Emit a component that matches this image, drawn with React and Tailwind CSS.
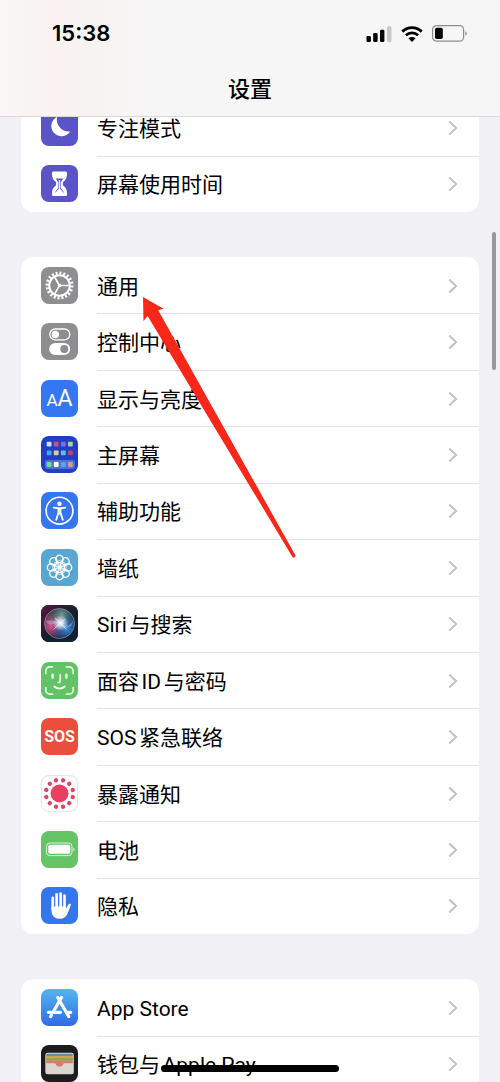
import React from 'react';

const FocusIcon = () => (
  <svg viewBox="0 0 37 37" className="size-full">
    <path
      d="M16.2 7.8A10.2 10.2 0 1 0 29.2 22.400A11.800 11.800 0 0 1 16.2 7.8Z"
      fill="#fff"
    />
  </svg>
);

const HourglassIcon = () => (
  <svg viewBox="0 0 37 37" className="size-full">
    <path
      d="M12.4 6.5h12.2a1.5 1.5 0 0 1 1.5 1.5c0 4.6-1.200 7.2-4.200 9.200v3c3 2 4.200 4.600 4.200 9.200a1.500 1.500 0 0 1-1.500 1.500H12.400a1.500 1.500 0 0 1-1.500-1.500c0-4.600 1.200-7.200 4.200-9.200v-3c-3-2-4.200-4.600-4.200-9.200a1.500 1.500 0 0 1 1.500-1.500Z"
      fill="#fff"
    />
    <path d="M14.800 13.500h7.400l-2.400 3.700v5.600l3.200 4.700h-9l3.200-4.700v-5.600Z" fill="#5a54c8" />
    <path d="M18.500 15v12M15.500 27.500L18.500 24L21.500 27.500Z" stroke="#fff" strokeWidth="1.300" fill="#fff" />
  </svg>
);

const GearIcon = () => (
  <svg viewBox="0 0 37 37" className="size-full" fill="none" stroke="#fff">
    <circle cx="18.5" cy="18.5" r="10.300" strokeWidth="2" />
    <circle cx="18.5" cy="18.5" r="12.500" strokeWidth="3" pathLength="40" strokeDasharray="1 1" />
    <path d="M18.500 18.500H28.500M18.500 18.500L13.500 9.800M18.500 18.500L13.500 27.200" strokeWidth="1.600" />
    <circle cx="18.5" cy="18.5" r="1.700" fill="#fff" stroke="none" />
  </svg>
);

const TogglesIcon = () => (
  <svg viewBox="0 0 37 37" className="size-full">
    <rect x="8.800" y="6" width="20" height="10.900" rx="5.400" fill="none" stroke="#fff" strokeWidth="1.300" />
    <circle cx="14.300" cy="11.500" r="3.700" fill="#fff" />
    <rect x="8.200" y="20" width="21" height="12" rx="6" fill="#fff" />
    <circle cx="23.300" cy="26" r="4" fill="#8e8e90" />
  </svg>
);

const DisplayIcon = () => (
  <span className="flex items-baseline justify-center font-['Roboto',sans-serif] leading-none text-white">
    <span className="text-[17px]">A</span>
    <span className="text-[23px]">A</span>
  </span>
);

const homeTiles = [
  ['#cfe3e6', '#c9507f', '#8f63e8', '#a9cf9a'],
  ['#4aa3ee', '#e6c98c', '#58c4dc', '#b8456c'],
  ['#6fdc9a', '#ffffff', '#55a7f0', '#d59a8c'],
];

const HomeScreenIcon = () => (
  <svg viewBox="0 0 37 37" className="size-full">
    <rect x="4" y="24" width="30" height="9" rx="2.500" fill="#4f6fdd" />
    {homeTiles.map((row, r) =>
      row.map((color, c) => (
        <rect
          key={`${r}-${c}`}
          x={5.700 + c * 7.100}
          y={[5.800, 14.400, 26.100][r]}
          width="4.800"
          height="4.800"
          rx="0.800"
          fill={color}
        />
      ))
    )}
  </svg>
);

const AccessibilityIcon = () => (
  <svg viewBox="0 0 37 37" className="size-full" fill="none" stroke="#fff" strokeLinecap="round" strokeLinejoin="round">
    <circle cx="18.5" cy="18.700" r="13.400" strokeWidth="1.600" />
    <circle cx="18.5" cy="11.800" r="2.200" fill="#fff" stroke="none" />
    <path d="M12.800 15.600L17 16.300H20L24.200 15.600" strokeWidth="1.900" />
    <path d="M17.200 16.500h2.600v5.500h-2.600Z" fill="#fff" strokeWidth="1.200" />
    <path d="M17.300 21.500L15.200 27.800M19.700 21.500L21.800 27.800" strokeWidth="1.900" />
  </svg>
);

const petals = [0, 45, 90, 135, 180, 225, 270, 315];

const WallpaperIcon = () => (
  <svg viewBox="0 0 37 37" className="size-full" fill="none" stroke="#fff">
    {petals.map((angle) => (
      <g key={angle} transform={`rotate(${angle} 18.5 18.5)`}>
        <circle cx="18.5" cy="10" r="3.700" strokeWidth="1.400" />
        <ellipse cx="18.5" cy="14" rx="2.200" ry="2.300" strokeWidth="0.800" />
      </g>
    ))}
    <circle cx="18.5" cy="18.5" r="2.100" fill="#fff" stroke="none" />
  </svg>
);

const SiriIcon = () => (
  <svg viewBox="0 0 37 37" className="size-full">
    <defs>
      <linearGradient id="siriBg" x1="0" y1="0" x2="1" y2="1">
        <stop offset="0" stopColor="#5c173c" />
        <stop offset="0.500" stopColor="#14202c" />
        <stop offset="1" stopColor="#10203a" />
      </linearGradient>
      <radialGradient id="siriPink" cx="0.220" cy="0.580" r="0.500">
        <stop offset="0" stopColor="#e0528f" />
        <stop offset="1" stopColor="#e0528f" stopOpacity="0" />
      </radialGradient>
      <radialGradient id="siriGreen" cx="0.580" cy="0.220" r="0.550">
        <stop offset="0" stopColor="#84a8a0" stopOpacity="0.900" />
        <stop offset="1" stopColor="#2c7b6c" stopOpacity="0" />
      </radialGradient>
      <radialGradient id="siriBlue" cx="0.740" cy="0.680" r="0.500">
        <stop offset="0" stopColor="#3a8fe4" />
        <stop offset="1" stopColor="#2b5fc4" stopOpacity="0" />
      </radialGradient>
      <radialGradient id="siriGlow">
        <stop offset="0" stopColor="#fff" />
        <stop offset="0.350" stopColor="#fff" stopOpacity="0.750" />
        <stop offset="1" stopColor="#fff" stopOpacity="0" />
      </radialGradient>
    </defs>
    <rect width="37" height="37" fill="url(#siriBg)" />
    <circle cx="18.5" cy="18.5" r="15" fill="url(#siriPink)" />
    <circle cx="18.5" cy="18.5" r="15" fill="url(#siriGreen)" />
    <circle cx="18.5" cy="18.5" r="15" fill="url(#siriBlue)" />
    <circle cx="18.5" cy="18.5" r="15" fill="none" stroke="#b9c4d6" strokeOpacity="0.500" />
    <path d="M5 16C11 14 15 17 19 19S28 23 32 16C31 24 24 24 19 19S10 25 5 16Z" fill="#bcd4f4" fillOpacity="0.400" />
    <circle cx="19.500" cy="18" r="8" fill="url(#siriGlow)" />
    <path d="M13 24L24 14M14 13L25 24" stroke="#fff" strokeOpacity="0.600" strokeLinecap="round" />
  </svg>
);

const FaceIdIcon = () => (
  <svg viewBox="0 0 37 37" className="size-full" fill="none" stroke="#eaffea" strokeWidth="1.700" strokeLinecap="round">
    <path d="M4.800 11.500V9a4.200 4.200 0 0 1 4.200-4.200h2.500M25.500 4.800H28a4.200 4.200 0 0 1 4.200 4.200v2.500M32.200 25.500V28a4.200 4.200 0 0 1-4.200 4.200h-2.500M11.500 32.200H9A4.200 4.200 0 0 1 4.800 28v-2.500" />
    <path d="M11.600 12.800v2.700M25.400 12.800v2.700" strokeWidth="2.500" />
    <path d="M19.200 12.500v6.200c0 1.200-.6 1.800-1.900 1.800" />
    <path d="M13.300 24.500c2.800 2.800 7.600 2.800 10.400 0" strokeWidth="1.900" />
  </svg>
);

const SosIcon = () => (
  <span className="font-['Roboto',sans-serif] text-[16px] leading-none font-bold text-white">SOS</span>
);

const exposureDots = [15, 45, 75, 105, 135, 165, 195, 225, 255, 285, 315, 345];

const ExposureIcon = () => (
  <svg viewBox="0 0 37 37" className="size-full" fill="#dd4468">
    <circle cx="18.5" cy="18.5" r="9" fill="#e8405f" />
    {exposureDots.map((angle) => (
      <circle key={angle} cx="18.5" cy="4.800" r="2.200" transform={`rotate(${angle} 18.5 18.5)`} />
    ))}
  </svg>
);

const BatteryIcon = () => (
  <svg viewBox="0 0 37 37" className="size-full">
    <rect x="5.500" y="12" width="25.500" height="12.600" rx="3.400" fill="none" stroke="#d9f5d9" strokeWidth="1" />
    <rect x="7.300" y="13.800" width="22" height="9" rx="1.800" fill="#fff" />
    <path d="M32.300 16.500c1.700.5 1.700 3.100 0 3.600Z" fill="#d9f5d9" />
  </svg>
);

const HandIcon = () => (
  <svg viewBox="0 0 37 37" className="size-full" fill="none" stroke="#fff" strokeLinecap="round">
    <path d="M11.700 10.800V22M15.600 7.300V20M19.600 6.500V20M23.500 8.500V20" strokeWidth="2.700" />
    <path
      d="M10.400 19.500h14.500v2.300l2.200-3.800c.7-1.200 1.700-1.400 2.900-.8-.8 2.500-2 6-3.200 8.800-1.500 3.600-4 5.800-8.300 5.800-5.400 0-8.100-3.800-8.100-8.800Z"
      fill="#fff"
      stroke="none"
    />
  </svg>
);

const AppStoreIcon = () => (
  <svg viewBox="0 0 37 37" className="size-full" fill="none" stroke="#fff" strokeWidth="3.200" strokeLinecap="round">
    <path d="M20.500 8.500L12.500 22.500M10.400 26.300L9.700 27.500M16.800 8.500L27.700 27.500" />
    <path d="M7.300 23.300H19.500M25.300 23.300H29.700" />
  </svg>
);

const WalletIcon = () => (
  <svg viewBox="0 0 37 37" className="size-full">
    <rect x="4.300" y="7.800" width="28.500" height="21.500" rx="2.200" fill="#dad7ce" />
    <path d="M5.200 11V9.900a1.200 1.200 0 0 1 1.200-1.200h24.200a1.200 1.200 0 0 1 1.200 1.200V11Z" fill="#5d8fae" />
    <rect x="5.200" y="11" width="26.600" height="3.200" fill="#c9a84e" />
    <rect x="5.200" y="13.200" width="26.600" height="2.600" fill="#8da456" />
    <path d="M5.200 15.800h26.600v2.400h-9c-.6 2-2.200 3.400-4.300 3.400s-3.700-1.400-4.300-3.400h-9Z" fill="#e0786c" />
  </svg>
);

const groups = [
  {
    id: 'focus',
    className: '-mt-[18px] min-h-[113px]',
    items: [
      { label: '专注模式', icon: FocusIcon, tile: 'bg-[#5a54c8]' },
      { label: '屏幕使用时间', icon: HourglassIcon, tile: 'bg-[#5a54c8]' },
    ],
  },
  {
    id: 'general',
    className: 'min-h-[677px]',
    items: [
      { label: '通用', icon: GearIcon, tile: 'bg-[#8e8e90]' },
      { label: '控制中心', icon: TogglesIcon, tile: 'bg-[#8e8e90]' },
      { label: '显示与亮度', icon: DisplayIcon, tile: 'bg-[#3577f0]' },
      { label: '主屏幕', icon: HomeScreenIcon, tile: 'bg-[#1f3fc4]' },
      { label: '辅助功能', icon: AccessibilityIcon, tile: 'bg-[#3575ee]' },
      { label: '墙纸', icon: WallpaperIcon, tile: 'bg-[#58a6d2]' },
      { label: 'Siri与搜索', icon: SiriIcon, tile: 'bg-[#14202c]' },
      { label: '面容ID与密码', icon: FaceIdIcon, tile: 'bg-[#62c366]' },
      { label: 'SOS紧急联络', icon: SosIcon, tile: 'bg-[#eb4e3d]' },
      { label: '暴露通知', icon: ExposureIcon, tile: 'bg-white ring-1 ring-[#e8e8ec] ring-inset' },
      { label: '电池', icon: BatteryIcon, tile: 'bg-[#64c466]' },
      { label: '隐私', icon: HandIcon, tile: 'bg-[#3576ee]' },
    ],
  },
  {
    id: 'store',
    className: 'min-h-[113px]',
    items: [
      { label: 'App Store', icon: AppStoreIcon, tile: 'bg-linear-to-b from-[#54b5f2] to-[#3369e4]' },
      { label: '钱包与Apple Pay', icon: WalletIcon, tile: 'bg-[#1c1c1e]' },
    ],
  },
];

const Chevron = () => (
  <svg viewBox="0 0 10 16" className="h-4 w-[10px] shrink-0" fill="none" stroke="#c2c2c5" strokeWidth="2">
    <path d="M1.200 1.500L8.200 8L1.200 14.500" />
  </svg>
);

const SettingsRow = ({ item }) => {
  const Icon = item.icon;
  return (
    <li className="group flex min-h-14 flex-1">
      <a href="#" className="flex flex-1 items-center gap-[19px] pl-5">
        <span className={`flex size-[37px] shrink-0 items-center justify-center overflow-hidden rounded-lg ${item.tile}`}>
          <Icon />
        </span>
        <span className="flex flex-1 items-center justify-between self-stretch border-t border-[#e2e2e4] pr-[21px] group-first:border-transparent">
          <span className="pt-[2px] font-['Roboto','Noto_Sans_CJK_SC',sans-serif] text-[21px] leading-7 [text-autospace:normal]">
            {item.label}
          </span>
          <Chevron />
        </span>
      </a>
    </li>
  );
};

const StatusIcons = () => (
  <div className="flex items-center gap-[9px]">
    <svg viewBox="0 0 26 16" className="h-4 w-[26px]">
      <rect x="0.500" y="10" width="4.400" height="6" rx="1.200" />
      <rect x="7.200" y="7" width="4.400" height="9" rx="1.200" />
      <rect x="14" y="3.700" width="4.400" height="12.300" rx="1.200" />
      <rect x="21" y="0.300" width="4.400" height="15.700" rx="1.200" fill="#c8c8c8" />
    </svg>
    <svg viewBox="0 0 22 16" className="h-4 w-[22px]" fill="none" stroke="#000">
      <path d="M1.300 5.600C6.800 0.300 15.200 0.300 20.700 5.600" strokeWidth="2.900" />
      <path d="M4.900 9.300C8.400 6 13.600 6 17.100 9.300" strokeWidth="2.700" />
      <path d="M11 16L7.400 12.300C9.500 10.500 12.500 10.500 14.600 12.300Z" fill="#000" stroke="none" />
    </svg>
    <svg viewBox="0 0 36 17" className="h-[17px] w-9">
      <rect x="0.600" y="0.600" width="31" height="15.600" rx="4" fill="none" stroke="#8d8d8d" strokeWidth="1.200" />
      <rect x="3" y="2.800" width="7.800" height="11.200" rx="1.800" />
      <path d="M33.300 6.200c1.900.7 1.900 3.700 0 4.400Z" fill="#8d8d8d" />
    </svg>
  </div>
);

const Header = () => (
  <header className="flex shrink-0 flex-col border-b border-[#d9d9db] bg-[#f6f6f6] bg-[linear-gradient(90deg,#f9f7f7,#faf1f2_50px,#f8f3f3_90px,#f6f6f6_160px)]">
    <div className="flex h-[67px] items-center justify-between pr-8 pl-[52px]">
      <span className="text-[22px] font-semibold">15:38</span>
      <StatusIcons />
    </div>
    <h1 className="h-[49px] text-center text-[22px] leading-[44px] font-medium">设置</h1>
  </header>
);

const Arrow = () => (
  <svg viewBox="0 0 154 262" className="pointer-events-none absolute top-[296px] left-[142px] w-[154px]">
    <path
      d="M1 1L21.500 12.700L16.200 14.200L153.500 259.500A2 2 0 0 1 150.600 261.300L5.600 20L1.500 25Z"
      fill="#f9261a"
    />
  </svg>
);

export default function App() {
  return (
    <div className="relative flex h-screen flex-col overflow-hidden bg-[#f0f0f5] font-['Inter','Noto_Sans_CJK_SC',sans-serif] text-black" lang="zh-CN">
      <Header />
      <main className="flex flex-1 flex-col gap-[45px] overflow-hidden px-[21px]">
        {groups.map((group) => (
          <ul key={group.id} className={`flex shrink-0 flex-col rounded-xl bg-white ${group.className}`}>
            {group.items.map((item) => (
              <SettingsRow key={item.label} item={item} />
            ))}
          </ul>
        ))}
      </main>

      {/* Scroll thumb */}
      <div className="absolute top-[232px] right-1 h-[138px] w-1 rounded-full bg-[#97979c]" />

      <Arrow />

      {/* Home indicator */}
      <div className="absolute bottom-[10px] left-1/2 h-[7px] w-[178px] -translate-x-1/2 rounded-full bg-black" />
    </div>
  );
}
